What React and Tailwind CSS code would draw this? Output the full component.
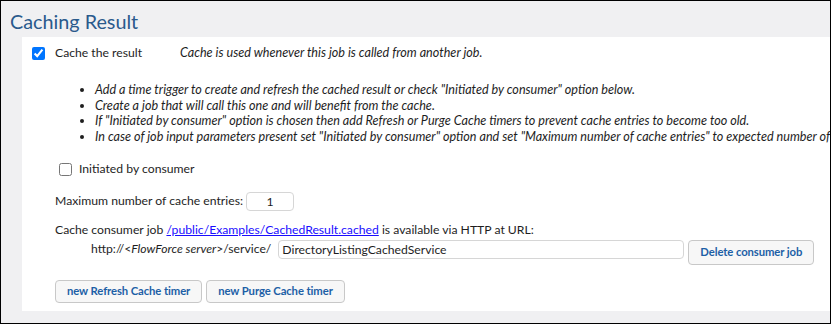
export default function App() {
  const font = { fontFamily: "Lato, 'Noto Sans', sans-serif" };
  const btn =
    "h-[23px] px-[11px] border border-[#c8c8c8] rounded-[4px] bg-[#f7f7f7] font-bold text-[11.3px] tracking-[-0.1px] text-[#1d5fa6]";
  return (
    <div
      className="w-[831px] h-[324px] border border-black bg-[#f0f0f2] flex flex-col overflow-hidden text-[12.2px] text-[#1e1e1e]"
      style={font}
    >
      <h1 className="pl-[9px] pt-[6px] h-[36px] text-[19.8px] leading-[28px] text-[#2a5a8c]">
        Caching Result
      </h1>
      <div className="ml-[21px] mb-[12px] flex-1 bg-white pl-[10px] pt-[9px] overflow-hidden whitespace-nowrap">
        <div className="flex items-center h-[15px]">
          <input type="checkbox" defaultChecked className="w-[13px] h-[13px] m-0 accent-[#0075ff]" />
          <span className="ml-[10px] w-[125px]">Cache the result</span>
          <i className="text-[12.6px]">Cache is used whenever this job is called from another job.</i>
        </div>
        <ul className="mt-[21px] ml-[50px] list-disc italic text-[12.6px] leading-[15.7px] pl-[13px]">
          <li>Add a time trigger to create and refresh the cached result or check "Initiated by consumer" option below.</li>
          <li>Create a job that will call this one and will benefit from the cache.</li>
          <li>If "Initiated by consumer" option is chosen then add Refresh or Purge Cache timers to prevent cache entries to become too old.</li>
          <li>In case of job input parameters present set "Initiated by consumer" option and set "Maximum number of cache entries" to expected number of parameter combinations.</li>
        </ul>
        <div className="flex items-center mt-[17px] ml-[27px] h-[15px]">
          <input type="checkbox" className="w-[13px] h-[13px] m-0" />
          <span className="ml-[7px]">Initiated by consumer</span>
        </div>
        <div className="flex items-center mt-[15px] ml-[23px]">
          <span>Maximum number of cache entries:</span>
          <input
            defaultValue="1"
            className="ml-[3px] w-[48px] h-[19px] border border-[#d6d6d6] rounded-[4px] text-center text-[12.2px] outline-none"
          />
        </div>
        <div className="mt-[11px] ml-[23px] leading-[16px]">
          Cache consumer job{" "}
          <a href="#" className="text-[#1a0dff] underline">
            /public/Examples/CachedResult.cached
          </a>{" "}
          is available via HTTP at URL:
        </div>
        <div className="flex items-start ml-[59px] mt-[2px]">
          <span className="leading-[18px]">
            http://&lt;<i>FlowForce server</i>&gt;/service/
          </span>
          <input
            defaultValue="DirectoryListingCachedService"
            className="ml-[7px] w-[406px] h-[19px] border border-[#d6d6d6] rounded-[4px] px-[3px] text-[12.2px] outline-none"
          />
          <button className={`ml-[4px] h-[25px] ${btn}`}>Delete consumer job</button>
        </div>
        <div className="flex gap-[4px] mt-[15px] ml-[23px]">
          <button className={btn}>new Refresh Cache timer</button>
          <button className={btn}>new Purge Cache timer</button>
        </div>
      </div>
    </div>
  );
}
